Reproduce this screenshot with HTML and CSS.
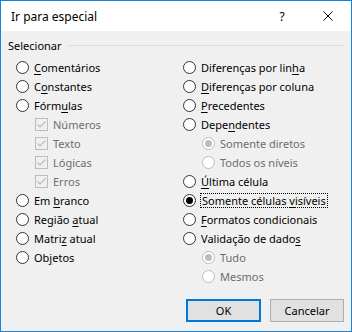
FILE: index.html
```html
<!DOCTYPE html>
<html lang="pt">
<head>
    <meta charset="UTF-8">
    <title>Ir para especial</title>
    <link rel="stylesheet" href="styles.css">
</head>
<body>
    <div class="dialog">
        <div class="titlebar">
            <span class="title">Ir para especial</span>
            <span class="title-btn">?</span>
            <span class="title-btn">
                <svg width="10" height="10" viewBox="0 0 10 10"><path d="M0.5 0.5L9.5 9.5M9.5 0.5L0.5 9.5" stroke="#000" stroke-width="1"/></svg>
            </span>
        </div>

        <div class="group-head"><span>Selecionar</span></div>

        <div class="columns">
            <div class="col">
                <div class="opt"><span class="radio"></span><span><u>C</u>omentários</span></div>
                <div class="opt"><span class="radio"></span><span>C<u>o</u>nstantes</span></div>
                <div class="opt"><span class="radio"></span><span>Fórm<u>u</u>las</span></div>
                <div class="opt sub disabled"><span class="check"><svg width="11" height="11" viewBox="0 0 11 11"><path d="M1.5 5.5L4 8L9.5 2.5" fill="none" stroke="#bcbcbc" stroke-width="1.2"/></svg></span><span>Números</span></div>
                <div class="opt sub disabled"><span class="check"><svg width="11" height="11" viewBox="0 0 11 11"><path d="M1.5 5.5L4 8L9.5 2.5" fill="none" stroke="#bcbcbc" stroke-width="1.2"/></svg></span><span>Texto</span></div>
                <div class="opt sub disabled"><span class="check"><svg width="11" height="11" viewBox="0 0 11 11"><path d="M1.5 5.5L4 8L9.5 2.5" fill="none" stroke="#bcbcbc" stroke-width="1.2"/></svg></span><span>Lógicas</span></div>
                <div class="opt sub disabled"><span class="check"><svg width="11" height="11" viewBox="0 0 11 11"><path d="M1.5 5.5L4 8L9.5 2.5" fill="none" stroke="#bcbcbc" stroke-width="1.2"/></svg></span><span>Erros</span></div>
                <div class="opt"><span class="radio"></span><span>Em <u>b</u>ranco</span></div>
                <div class="opt"><span class="radio"></span><span>Região <u>a</u>tual</span></div>
                <div class="opt"><span class="radio"></span><span>Matri<u>z</u> atual</span></div>
                <div class="opt"><span class="radio"></span><span>Ob<u>j</u>etos</span></div>
            </div>
            <div class="col">
                <div class="opt"><span class="radio"></span><span>Diferenças por lin<u>h</u>a</span></div>
                <div class="opt"><span class="radio"></span><span><u>D</u>iferenças por coluna</span></div>
                <div class="opt"><span class="radio"></span><span><u>P</u>recedentes</span></div>
                <div class="opt"><span class="radio"></span><span>Depe<u>n</u>dentes</span></div>
                <div class="opt sub disabled"><span class="radio checked"></span><span>Somente diretos</span></div>
                <div class="opt sub disabled"><span class="radio"></span><span>Todos os níveis</span></div>
                <div class="opt"><span class="radio"></span><span><u>Ú</u>ltima célula</span></div>
                <div class="opt"><span class="radio checked"></span><span class="focus">Somente células <u>v</u>isíveis</span></div>
                <div class="opt"><span class="radio"></span><span><u>F</u>ormatos condicionais</span></div>
                <div class="opt"><span class="radio"></span><span>Validação de dado<u>s</u></span></div>
                <div class="opt sub disabled"><span class="radio checked"></span><span>Tudo</span></div>
                <div class="opt sub disabled"><span class="radio"></span><span>Mesmos</span></div>
            </div>
        </div>

        <div class="buttons">
            <button class="btn default">OK</button>
            <button class="btn">Cancelar</button>
        </div>
    </div>
</body>
</html>
```

FILE: styles.css
```css
* {
    box-sizing: border-box;
}
body {
    margin: 0;
    font-family: "Segoe UI", "Noto Sans", sans-serif;
    font-size: 11px;
    color: #000;
}
.dialog {
    width: 352px;
    height: 332px;
    border: 1px solid #1883d7;
    background-color: #f0f0f0;
}
.titlebar {
    display: flex;
    align-items: center;
    height: 30px;
    background-color: #fff;
}
.title {
    flex: 1;
    padding-left: 10px;
    font-size: 12px;
}
.title-btn {
    width: 46px;
    height: 30px;
    display: flex;
    justify-content: center;
    align-items: center;
    font-size: 12px;
}
.group-head {
    display: flex;
    align-items: center;
    height: 14px;
    margin: 7px 7px 0 7px;
}
.group-head::after {
    content: "";
    flex: 1;
    height: 1px;
    margin-left: 6px;
    background-color: #dcdcdc;
}
.columns {
    display: grid;
    grid-template-columns: 167px 1fr;
    padding-left: 15px;
    margin-top: 6px;
}
.opt {
    display: flex;
    align-items: center;
    height: 19px;
    gap: 5px;
    white-space: nowrap;
}
.opt.sub {
    padding-left: 19px;
}
.opt.disabled {
    color: #6d6d6d;
}
.radio {
    width: 13px;
    height: 13px;
    border: 1px solid #333;
    border-radius: 50%;
    background-color: #fff;
    display: flex;
    justify-content: center;
    align-items: center;
    flex-shrink: 0;
}
.radio.checked::after {
    content: "";
    width: 7px;
    height: 7px;
    border-radius: 50%;
    background-color: #000;
}
.disabled .radio {
    border-color: #bcbcbc;
}
.disabled .radio.checked::after {
    background-color: #bcbcbc;
}
.check {
    width: 13px;
    height: 13px;
    border: 1px solid #bcbcbc;
    background-color: #f0f0f0;
    display: flex;
    justify-content: center;
    align-items: center;
    flex-shrink: 0;
}
.focus {
    outline: 1px dotted #000;
    outline-offset: 0;
    padding: 0 1px;
    line-height: 13px;
}
u {
    text-underline-offset: 2px;
}
.buttons {
    display: flex;
    justify-content: flex-end;
    gap: 9px;
    margin-top: 13px;
    padding-right: 7px;
}
.btn {
    width: 74px;
    height: 23px;
    font-family: inherit;
    font-size: 11px;
    color: #000;
    background-color: #e1e1e1;
    border: 1px solid #adadad;
    padding: 0;
}
.btn.default {
    width: 75px;
    border: 2px solid #0078d7;
}
```
